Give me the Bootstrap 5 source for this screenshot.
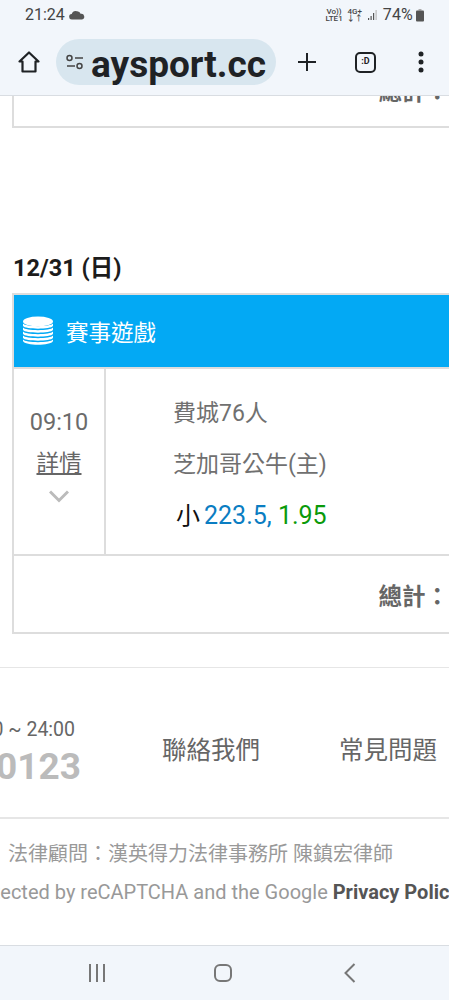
<!DOCTYPE html>
<html lang="zh-Hant">

<head>
    <meta charset="UTF-8">
    <meta name="viewport" content="width=device-width, initial-scale=1.0">
    <title>賽事遊戲</title>
    <link href="https://cdn.jsdelivr.net/npm/bootstrap@5.3.0/dist/css/bootstrap.min.css" rel="stylesheet">
    <style>
        html, body { height: 1000px; overflow: hidden; }
        body { width: 449px; background: #fff; font-family: Roboto, "Noto Sans CJK TC", sans-serif; color: #666; }
        .phone-top { height: 96px; background: #f2f6fb; border-bottom: 1px solid #d9dde2; position: relative; z-index: 2; }
        .status-bar { height: 30px; padding: 0 24px 0 25px; color: #444; }
        .status-time { font-size: 16px; line-height: 30px; }
        .status-batt { font-size: 16px; letter-spacing: .2px; }
        .status-net { font-size: 8px; line-height: 7px; font-weight: 500; }
        .batt-icon { margin-left: 2px; }
        .tool-bar { height: 46px; margin-top: 9px; padding-left: 17px; }
        .url-pill { width: 220px; height: 46px; margin-left: 15px; margin-right: 21px; background: #d8e6ef; border-radius: 23px; padding-left: 9px; overflow: hidden; white-space: nowrap; }
        .url-text { font-size: 37px; font-weight: 700; color: #1f2225; line-height: 46px; margin-left: 6px; margin-top: 6px; }
        .tab-count { width: 21px; height: 21px; border: 2px solid #1f2225; border-radius: 5px; font-size: 9px; font-weight: 700; color: #1f2225; margin-left: 38px; margin-right: 42px; }
        .old-card { height: 32px; margin-left: 12px; border-left: 2px solid #ddd; border-bottom: 2px solid #ddd; position: relative; }
        .old-total { position: absolute; right: 0; top: -21px; font-size: 23.5px; font-weight: 700; white-space: nowrap; }
        .date-title { margin: 126px 0 0 13px; height: 39px; font-size: 23.500px; font-weight: 700; color: #1c1c1c; line-height: 28px; }
        .game-card { margin-left: 12px; border: 2px solid #ddd; border-right: 0; height: 341px; }
        .game-head { height: 72px; background: #03a9f4; color: #fff; font-size: 22.500px; padding-left: 9px; }
        .game-head svg { margin-right: 13px; }
        .head-title { margin-top: 5px; }
        .game-body { height: 189px; border-top: 2px solid #ddd; border-bottom: 2px solid #ddd; }
        .time-cell { width: 92px; border-right: 2px solid #ddd; padding-top: 39px; }
        .time-text { font-size: 23.500px; line-height: 28px; color: #6b6b6b; }
        .detail-link { display: block; font-size: 22.500px; line-height: 28px; margin-top: 13px; color: #666; }
        .chevron-icon { margin-top: 13px; }
        .team-cell { padding: 29px 0 0 67px; font-size: 23px; }
        .team-line { height: 51px; line-height: 32px; color: #707070; }
        .bet-line { font-size: 25px; line-height: 32px; margin-left: 3px; }
        .bet-side { color: #111; font-size: 24px; margin-right: 4px; }
        .bet-point { color: #0a7dc2; }
        .bet-odds { color: #0a9a0a; }
        .total-row { height: 76px; padding-top: 24px; font-size: 23.500px; font-weight: 700; white-space: nowrap; }
        .foot-links { margin-top: 33px; height: 152px; padding-top: 18px; border-top: 1px solid #e6e6e6; border-bottom: 2px solid #e6e6e6; overflow: hidden; }
        .hours-box { width: 81px; flex-shrink: 0; white-space: nowrap; }
        .hours-text { font-size: 19.500px; line-height: 24px; color: #666; margin-right: 6px; margin-bottom: 6px; }
        .hours-phone { font-size: 37px; line-height: 38px; font-weight: 700; color: #bbb; }
        .foot-link { font-size: 24.500px; color: #666; white-space: nowrap; margin-left: 81px; }
        .foot-link-last { margin-left: 79px; }
        .legal-box { height: 126px; padding-top: 21px; overflow: hidden; white-space: nowrap; }
        .legal-line { font-size: 20px; line-height: 28px; color: #999; margin-left: 8px; }
        .legal-en { font-size: 20px; line-height: 28px; color: #999; margin-top: 10px; margin-left: -136px; }
        .legal-en b { color: #555; }
        .phone-nav { height: 55px; padding-left: 88px; background: #f2f6fb; border-top: 1px solid #d9dde2; }
        .nav-home { margin-left: 108px; }
        .nav-back { margin-left: 112px; }
    </style>
</head>

<body>
    <div class="phone-top">
        <div class="status-bar d-flex align-items-center">
            <span class="status-time">21:24</span>
            <svg class="ms-1" width="16" height="10" viewBox="0 0 16 10"><path d="M3 9.500a2.700 2.700 0 0 1-.3-5.400A4.400 4.400 0 0 1 8 1.200 3.600 3.600 0 0 1 11.600 3.800 2.900 2.900 0 0 1 13 9.500z" fill="#555"/></svg>
            <div class="ms-auto status-net text-center">Vo))<br>LTE1</div>
            <div class="ms-1 status-net text-center">4G+<br>↓↑</div>
            <svg class="ms-1" width="12" height="12" viewBox="0 0 12 12"><path d="M1 9h1.200v2H1zM3.500 7h1.200v4H3.500zM6 4h1.200v7H6z" fill="#555"/><path d="M8.500 1h1.200v10H8.500z" fill="#bbb"/></svg>
            <span class="status-batt ms-1">74%</span>
            <svg class="batt-icon" width="10" height="13" viewBox="0 0 10 13"><path d="M3.500 0h3v1.500h-3z" fill="#aaa"/><rect x="1" y="1.500" width="8" height="11" rx="1" fill="#555"/></svg>
        </div>
        <div class="tool-bar d-flex align-items-center">
            <svg width="24" height="24" viewBox="0 0 24 24" fill="none" stroke="#1f2225" stroke-width="2.200" stroke-linejoin="round"><path d="M2.500 11.500 12 2.500l9.500 9H18.500v10h-13v-10z"/></svg>
            <div class="url-pill d-flex align-items-center">
                <svg width="20" height="16" viewBox="0 0 20 16" fill="none" stroke="#444" stroke-width="1.500"><circle cx="4.500" cy="4" r="2.500"/><path d="M10 4h8M2 12h8"/><circle cx="14.500" cy="12" r="2.500"/></svg>
                <span class="url-text">aysport.cc</span>
            </div>
            <svg width="20" height="20" viewBox="0 0 20 20" stroke="#1f2225" stroke-width="2"><path d="M10 1v18M1 10h18"/></svg>
            <div class="tab-count d-flex align-items-center justify-content-center">:D</div>
            <svg width="6" height="22" viewBox="0 0 6 22" fill="#1f2225"><circle cx="3" cy="3" r="2.500"/><circle cx="3" cy="11" r="2.500"/><circle cx="3" cy="19" r="2.500"/></svg>
        </div>
    </div>

    <div class="old-card"><span class="old-total">總計：</span></div>

    <div class="date-title">12/31 (日)</div>

    <div class="game-card">
        <div class="game-head d-flex align-items-center">
            <svg width="30" height="30" viewBox="0 0 30 30" fill="#fff"><ellipse cx="15" cy="5.500" rx="15" ry="5"/><path d="M0 7.500c2 3.500 28 3.500 30 0v2.500c-2 3.500-28 3.500-30 0zM0 11.500c2 3.500 28 3.500 30 0v2.500c-2 3.500-28 3.500-30 0zM0 15.500c2 3.500 28 3.500 30 0v2.500c-2 3.500-28 3.500-30 0zM0 19.500c2 3.500 28 3.500 30 0v2.500c-2 3.500-28 3.500-30 0zM0 23.500c2 3.500 28 3.500 30 0v1.500c-2 5-28 5-30 0z"/></svg>
            <span class="head-title">賽事遊戲</span>
        </div>
        <div class="game-body d-flex">
            <div class="time-cell text-center">
                <div class="time-text">09:10</div>
                <a class="detail-link" href="#">詳情</a>
                <svg class="chevron-icon d-block mx-auto" width="20" height="13" viewBox="0 0 20 13" fill="none" stroke="#bbb" stroke-width="3"><path d="M1 1.500 10 10.500 19 1.500"/></svg>
            </div>
            <div class="team-cell flex-grow-1">
                <div class="team-line">費城76人</div>
                <div class="team-line">芝加哥公牛(主)</div>
                <div class="bet-line"><span class="bet-side">小</span><span class="bet-point">223.5,</span> <span class="bet-odds">1.95</span></div>
            </div>
        </div>
        <div class="total-row text-end">總計：</div>
    </div>

    <div class="foot-links d-flex align-items-center">
        <div class="hours-box d-flex flex-column align-items-end">
            <div class="hours-text">0 ~ 24:00</div>
            <div class="hours-phone">0123</div>
        </div>
        <a class="foot-link text-decoration-none" href="#">聯絡我們</a>
        <a class="foot-link foot-link-last text-decoration-none" href="#">常見問題</a>
    </div>

    <div class="legal-box">
        <div class="legal-line">法律顧問：漢英得力法律事務所 陳鎮宏律師</div>
        <div class="legal-en">This site is protected by reCAPTCHA and the Google <b>Privacy Policy</b></div>
    </div>

    <div class="phone-nav d-flex align-items-center">
        <svg width="18" height="18" viewBox="0 0 18 18" stroke="#777" stroke-width="2"><path d="M2 0v18M9 0v18M16 0v18"/></svg>
        <svg class="nav-home" width="18" height="18" viewBox="0 0 18 18" fill="none" stroke="#777" stroke-width="2"><rect x="1" y="1" width="16" height="16" rx="5"/></svg>
        <svg class="nav-back" width="12" height="20" viewBox="0 0 12 20" fill="none" stroke="#777" stroke-width="2"><path d="M10.500 1 1.500 10l9 9"/></svg>
    </div>

    <script src="https://cdn.jsdelivr.net/npm/bootstrap@5.3.0/dist/js/bootstrap.bundle.min.js"></script>
</body>

</html>
